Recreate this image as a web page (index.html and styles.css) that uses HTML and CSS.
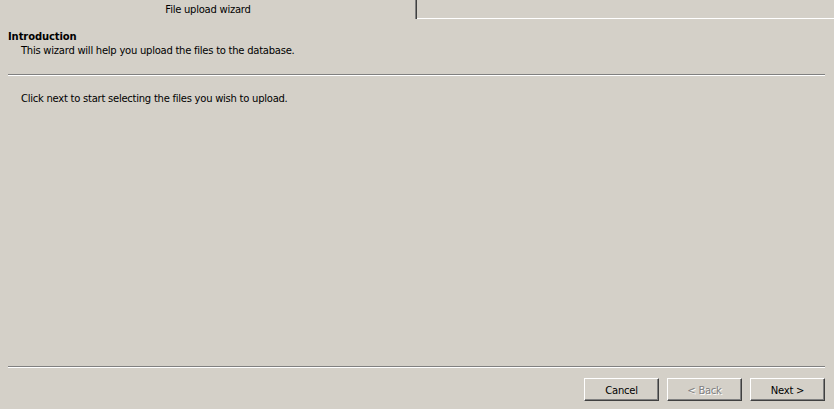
FILE: index.html
```html
<!DOCTYPE html>
<html>
<head>
<meta charset="utf-8">
<link rel="stylesheet" href="styles.css">
</head>
<body>
<div class="window">
  <div class="tabbar">
    <div class="tab">File upload wizard</div>
    <div class="tab-rest"></div>
  </div>
  <div class="header">
    <div class="title">Introduction</div>
    <div class="subtitle">This wizard will help you upload the files to the database.</div>
  </div>
  <div class="sep"></div>
  <div class="body">
    <p class="text">Click next to start selecting the files you wish to upload.</p>
  </div>
  <div class="sep"></div>
  <div class="buttons">
    <button class="btn">Cancel</button>
    <button class="btn disabled">&lt; Back</button>
    <button class="btn">Next &gt;</button>
  </div>
</div>
</body>
</html>
```
FILE: styles.css
```css
html, body {
  margin: 0;
  padding: 0;
  background: #d4d0c8;
}
body {
  width: 834px;
  height: 409px;
  overflow: hidden;
  font-family: "DejaVu Sans", sans-serif;
  font-size: 10px;
  letter-spacing: -0.25px;
  color: #000;
}
.window {
  display: flex;
  flex-direction: column;
  height: 409px;
}
.tabbar {
  display: flex;
  height: 19px;
}
.tab {
  box-sizing: border-box;
  width: 417px;
  height: 19px;
  padding-top: 1px;
  border-right: 1px solid #404040;
  box-shadow: inset -1px 0 0 #808080;
  text-align: center;
  line-height: 18px;
}
.tab-rest {
  flex: 1;
  box-sizing: border-box;
  height: 19px;
  border-bottom: 1px solid #fff;
}
.header {
  padding: 11px 0 0 8px;
  line-height: 14px;
}
.title {
  font-weight: bold;
  letter-spacing: -0.1px;
}
.subtitle {
  padding-left: 13px;
}
.sep {
  margin: 0 9px 0 8px;
  border-top: 1px solid #808080;
  border-bottom: 1px solid #fff;
  height: 0;
}
.header + .sep {
  margin-top: 16px;
}
.body {
  flex: 1;
  padding: 16px 0 0 21px;
}
.text {
  margin: 0;
  line-height: 13px;
}
.buttons {
  display: flex;
  justify-content: flex-end;
  gap: 8px;
  padding: 10px 9px 8px 0;
}
.btn {
  box-sizing: border-box;
  width: 75px;
  height: 23px;
  margin: 0;
  padding: 2px 0 0 0;
  background: #d4d0c8;
  font-family: "DejaVu Sans", sans-serif;
  font-size: 10px;
  letter-spacing: -0.25px;
  color: #000;
  border: 1px solid;
  border-color: #fff #404040 #404040 #fff;
  box-shadow: inset -1px -1px 0 #808080;
  border-radius: 0;
}
.btn.disabled {
  color: #808080;
  text-shadow: 1px 1px 0 #fff;
}
```
